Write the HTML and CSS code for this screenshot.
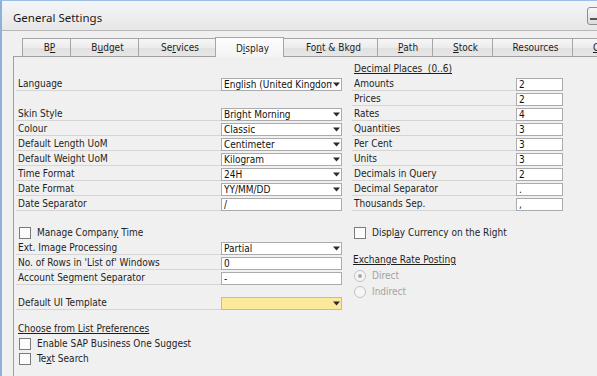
FILE: index.html
```html
<!DOCTYPE html>
<html>
<head>
<meta charset="utf-8">
<link rel="stylesheet" href="styles.css">
</head>
<body>
<div class="window">
  <header class="titlebar">
    <span class="title">General Settings</span>
    <span class="winbtn"><span class="dash"></span></span>
  </header>
  <nav class="tabs">
    <div class="tab t-bp">B<u>P</u></div>
    <div class="tab t-budget">B<u>u</u>dget</div>
    <div class="tab t-services">Se<u>r</u>vices</div>
    <div class="tab t-display active">D<u>i</u>splay</div>
    <div class="tab t-font">Fo<u>n</u>t &amp; Bkgd</div>
    <div class="tab t-path"><u>P</u>ath</div>
    <div class="tab t-stock"><u>S</u>tock</div>
    <div class="tab t-res">Resources</div>
    <div class="tab t-more"><u>C</u></div>
  </nav>
  <section class="panel">
    <div class="section upper">
      <div class="lcol">
        <div class="gap15"></div>
        <div class="row"><span class="lbl">Language</span><span class="box combo"><span class="val">English (United Kingdom)</span><svg class="arrow" width="9" height="11" viewBox="0 0 9 11"><path d="M1 3.5h7L4.5 7.5z" fill="#2b2b2b"/></svg></span></div>
        <div class="gap15"></div>
        <div class="row"><span class="lbl">Skin Style</span><span class="box combo"><span class="val">Bright Morning</span><svg class="arrow" width="9" height="11" viewBox="0 0 9 11"><path d="M1 3.5h7L4.5 7.5z" fill="#2b2b2b"/></svg></span></div>
        <div class="row"><span class="lbl">Colour</span><span class="box combo"><span class="val">Classic</span><svg class="arrow" width="9" height="11" viewBox="0 0 9 11"><path d="M1 3.5h7L4.5 7.5z" fill="#2b2b2b"/></svg></span></div>
        <div class="row"><span class="lbl">Default Length UoM</span><span class="box combo"><span class="val">Centimeter</span><svg class="arrow" width="9" height="11" viewBox="0 0 9 11"><path d="M1 3.5h7L4.5 7.5z" fill="#2b2b2b"/></svg></span></div>
        <div class="row"><span class="lbl">Default Weight UoM</span><span class="box combo"><span class="val">Kilogram</span><svg class="arrow" width="9" height="11" viewBox="0 0 9 11"><path d="M1 3.5h7L4.5 7.5z" fill="#2b2b2b"/></svg></span></div>
        <div class="row"><span class="lbl">Time Format</span><span class="box combo"><span class="val">24H</span><svg class="arrow" width="9" height="11" viewBox="0 0 9 11"><path d="M1 3.5h7L4.5 7.5z" fill="#2b2b2b"/></svg></span></div>
        <div class="row"><span class="lbl">Date Format</span><span class="box combo"><span class="val">YY/MM/DD</span><svg class="arrow" width="9" height="11" viewBox="0 0 9 11"><path d="M1 3.5h7L4.5 7.5z" fill="#2b2b2b"/></svg></span></div>
        <div class="row"><span class="lbl">Date Separator</span><span class="box"><span class="val">/</span></span></div>
      </div>
      <div class="rcol">
        <div class="head"><u>Decimal Places&nbsp; (0..6)</u></div>
        <div class="row"><span class="lbl rl">Amounts</span><span class="box num">2</span></div>
        <div class="row"><span class="lbl rl">Prices</span><span class="box num">2</span></div>
        <div class="row"><span class="lbl rl">Rates</span><span class="box num">4</span></div>
        <div class="row"><span class="lbl rl">Quantities</span><span class="box num">3</span></div>
        <div class="row"><span class="lbl rl">Per Cent</span><span class="box num">3</span></div>
        <div class="row"><span class="lbl rl">Units</span><span class="box num">3</span></div>
        <div class="row"><span class="lbl rl">Decimals in Query</span><span class="box num">2</span></div>
        <div class="row"><span class="lbl rl">Decimal Separator</span><span class="box num">.</span></div>
        <div class="row"><span class="lbl rl">Thousands Sep.</span><span class="box num">,</span></div>
      </div>
    </div>
    <div class="section lower">
      <div class="lcol">
        <div class="crow"><span class="cb"></span><span>Manage Compan<u>y</u> Time</span></div>
        <div class="row"><span class="lbl">Ext. Image Processing</span><span class="box combo"><span class="val">Partial</span><svg class="arrow" width="9" height="11" viewBox="0 0 9 11"><path d="M1 3.5h7L4.5 7.5z" fill="#2b2b2b"/></svg></span></div>
        <div class="row"><span class="lbl">No. of Rows in 'List of' Windows</span><span class="box"><span class="val">0</span></span></div>
        <div class="row"><span class="lbl">Account Segment Separator</span><span class="box"><span class="val">-</span></span></div>
        <div class="gap10"></div>
        <div class="row"><span class="lbl">Default UI Template</span><span class="box combo yellow"><span class="val"></span><svg class="arrow" width="9" height="11" viewBox="0 0 9 11"><path d="M1 3.5h7L4.5 7.5z" fill="#2b2b2b"/></svg></span></div>
        <div class="head cfl"><u>Choose from List Preferences</u></div>
        <div class="crow"><span class="cb"></span><span>Enable SAP Business One Suggest</span></div>
        <div class="crow"><span class="cb"></span><span>Te<u>x</u>t Search</span></div>
      </div>
      <div class="rcol">
        <div class="crow rc"><span class="cb"></span><span>Displ<u>a</u>y Currency on the Right</span></div>
        <div class="head erp"><u>Exchange Rate Posting</u></div>
        <div class="rrow first"><span class="radio on"></span><span>Direct</span></div>
        <div class="rrow"><span class="radio"></span><span>Indirect</span></div>
      </div>
    </div>
  </section>
</div>
</body>
</html>
```
FILE: styles.css
```css
* { box-sizing: border-box; }
html, body { margin: 0; padding: 0; }
body {
  width: 597px;
  height: 376px;
  overflow: hidden;
  background: #f0f0f0;
  font-family: "DejaVu Sans Condensed", "DejaVu Sans", sans-serif;
  font-stretch: condensed;
  font-size: 10px;
  color: #1e1e1e;
}
.window {
  height: 376px;
  border-top: 1px solid #9dbce6;
  border-left: 2px solid #8fb0dc;
  overflow: hidden;
}
.titlebar {
  height: 30px;
  display: flex;
  align-items: flex-start;
  background: linear-gradient(#f4f5f7, #e7e7e8);
  border-bottom: 1px solid #b8b8b8;
}
.title {
  font-family: "Noto Sans", sans-serif;
  font-stretch: normal;
  font-size: 11.5px;
  line-height: 15px;
  padding: 9px 0 0 11px;
  color: #1a1a1a;
}
.winbtn {
  margin-left: auto;
  margin-top: 6px;
  margin-right: -16px;
  width: 26px;
  height: 18px;
  border: 1px solid #8d8d8d;
  border-radius: 3px;
  background: linear-gradient(#f8f8f8, #dcdcdc);
  display: flex;
  align-items: flex-end;
  padding: 0 0 4px 2px;
}
.dash { width: 12px; height: 2px; background: #555; }

.tabs {
  display: flex;
  align-items: flex-end;
  height: 25px;
  padding-left: 20px;
}
.tab {
  height: 18px;
  border: 1px solid #a5a5a5;
  border-bottom: none;
  margin-right: -1px;
  background: linear-gradient(#f6f6f6, #ececec 50%, #e1e1e1 51%, #e6e6e6);
  display: flex;
  justify-content: center;
  padding: 2px 0 0 6px;
  line-height: 14px;
  white-space: nowrap;
  overflow: hidden;
  flex: none;
}
.tab.active {
  height: 20px;
  margin-bottom: -1px;
  padding-top: 4px;
  background: linear-gradient(#fdfdfd, #f3f3f3);
  position: relative;
  z-index: 1;
}
.t-bp { width: 49px; }
.t-budget { width: 69px; }
.t-services { width: 78px; }
.t-display { width: 69px; }
.t-font { width: 95px; }
.t-path { width: 56px; }
.t-stock { width: 61px; }
.t-res { width: 81px; }
.t-more { width: 40px; justify-content: flex-start; padding-left: 20px; }

.panel {
  margin-left: 11px;
  height: 330px;
  border-top: 1px solid #a0a0a0;
  border-left: 1px solid #a0a0a0;
  padding: 4px 0 0 2px;
}
.section { display: flex; gap: 10px; }
.lower { margin-top: 14px; }
.lcol { width: 326px; display: flex; flex-direction: column; }
.rcol { width: 211px; display: flex; flex-direction: column; }
.gap15 { height: 15px; }
.gap10 { height: 10px; }

.row { display: flex; height: 15px; }
.lbl {
  width: 205px;
  border-bottom: 1px solid #d5d5d5;
  padding: 2px 0 0 2px;
  line-height: 12px;
  white-space: nowrap;
}
.lbl.rl { width: 164px; }
.box {
  width: 121px;
  height: 13px;
  align-self: flex-end;
  border: 1px solid #ababab;
  background: #fff;
  padding-left: 2px;
  line-height: 12px;
  white-space: nowrap;
  display: flex;
  color: #111;
}
.box.num { width: 47px; }
.val { width: 112px; overflow: hidden; white-space: nowrap; }
.arrow { margin-left: auto; flex: none; }
.box.yellow { background: #fde99b; border-color: #cbbd8b; }

.head {
  height: 15px;
  line-height: 13px;
  padding: 1px 0 0 2px;
  white-space: pre;
}
.cfl { margin-top: 11px; }
.erp { margin-top: 12px; padding-left: 1px; }

.crow { display: flex; height: 15px; line-height: 16px; white-space: nowrap; }
.cb {
  width: 12px;
  height: 12px;
  margin: 2px 6px 0 3px;
  border: 1px solid #7b7b7b;
  background: #fcfcfc;
  flex: none;
}
.crow.rc .cb { margin-left: 2px; }

.rrow { display: flex; height: 16px; line-height: 16px; color: #a2a2a2; }
.rrow.first { margin-top: 1px; }
.radio {
  width: 12px;
  height: 12px;
  margin: 2px 6px 0 2px;
  border: 1px solid #c2c2c2;
  border-radius: 50%;
  background: #f6f6f6;
  flex: none;
  display: flex;
  align-items: center;
  justify-content: center;
}
.radio.on::after {
  content: "";
  width: 4px;
  height: 4px;
  border-radius: 50%;
  background: #a8a8a8;
}
```
